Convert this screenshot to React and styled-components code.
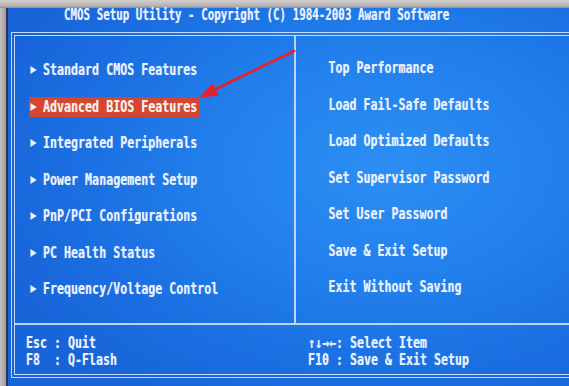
import React from 'react';
import styled, { createGlobalStyle } from 'styled-components';

const Global = createGlobalStyle`
  html, body { margin: 0; padding: 0; width: 569px; height: 386px; overflow: hidden; background: #a9a5a4; }
  #root { width: 569px; height: 386px; }
`;

const FONT = `"DejaVu Sans Mono", "Liberation Mono", monospace`;

const Monitor = styled.div`
  position: relative;
  width: 569px;
  height: 386px;
  display: flex;
  flex-direction: column;
  overflow: hidden;
`;

const TopBezel = styled.div`
  flex: none;
  height: 8px;
  background: linear-gradient(to bottom, #d2cecd, #b9b4b3 70%, #8f8a8d);
`;

const Body = styled.div`
  flex: 1;
  display: flex;
  min-height: 0;
`;

const SideBezel = styled.div`
  flex: none;
  width: 6px;
  background: linear-gradient(to right, #c4bfbe, #a19b9b);
  border-right: 2px solid #2b3150;
`;

const Screen = styled.div`
  flex: 1;
  display: flex;
  flex-direction: column;
  padding: 0 4px 0 3px;
  background:
    radial-gradient(ellipse 70% 75% at 62% 42%, #2c8ef3 0%, #2280ec 40%, #1b70e2 70%, #1763d8 100%);
  font-family: ${FONT};
  font-weight: bold;
  color: #eaf1ff;
  text-shadow: 0 0 1px rgba(225, 238, 255, 0.55);
`;

const TitleBar = styled.div`
  flex: none;
  height: 24px;
  display: flex;
  align-items: flex-start;
  padding-left: 53px;
  font-size: 15.5px;
  line-height: 15px;
`;

const Scaled = styled.span`
  display: inline-block;
  white-space: pre;
  transform: scaleX(${p => p.$s || 0.705});
  transform-origin: left center;
`;

const Box = styled.div`
  flex: none;
  height: 346px;
  box-sizing: border-box;
  border: 4px double #c4daf7;
  display: grid;
  grid-template-columns: 279px 2px 1fr;
  grid-template-rows: 1fr 2px 49px;
`;

const Menu = styled.div`
  display: flex;
  flex-direction: column;
  gap: 16.5px;
  padding-top: ${p => p.$top}px;
  padding-left: ${p => p.$left}px;
`;

const Item = styled.div`
  display: flex;
  align-items: center;
  width: max-content;
  height: 20px;
  padding: 0 3px 0 2px;
  font-size: 16.5px;
  line-height: 20px;
  white-space: pre;
  transform: scaleX(0.705);
  transform-origin: left center;
  background: ${p => (p.$active ? '#d4462f' : 'transparent')};
  color: ${p => (p.$active ? '#fdf1ea' : '#eaf1ff')};
`;

const Pointer = styled.span`
  width: 0;
  height: 0;
  border-left: 9px solid #eef4ff;
  border-top: 4.5px solid transparent;
  border-bottom: 4.5px solid transparent;
  margin-right: 9px;
`;

const VLine = styled.div`
  background: #bcd4f5;
`;

const HLine = styled.div`
  grid-column: 1 / -1;
  background: #bcd4f5;
`;

const Footer = styled.div`
  grid-column: 1 / -1;
  display: grid;
  grid-template-columns: 281px 1fr;
  padding-top: 9.5px;
  font-size: 15px;
`;

const FooterCol = styled.div`
  display: flex;
  flex-direction: column;
  padding-left: ${p => p.$left}px;
`;

const FooterLine = styled(Scaled)`
  line-height: 17px;
`;

const Overlay = styled.svg`
  position: absolute;
  left: 0;
  top: 0;
  pointer-events: none;
`;

const leftItems = [
  'Standard CMOS Features',
  'Advanced BIOS Features',
  'Integrated Peripherals',
  'Power Management Setup',
  'PnP/PCI Configurations',
  'PC Health Status',
  'Frequency/Voltage Control',
];

const rightItems = [
  'Top Performance',
  'Load Fail-Safe Defaults',
  'Load Optimized Defaults',
  'Set Supervisor Password',
  'Set User Password',
  'Save & Exit Setup',
  'Exit Without Saving',
];

export default function App() {
  return (
    <>
      <Global />
      <Monitor>
        <TopBezel />
        <Body>
          <SideBezel />
          <Screen>
            <TitleBar>
              <Scaled $s={0.7}>CMOS Setup Utility - Copyright (C) 1984-2003 Award Software</Scaled>
            </TitleBar>
            <Box>
              <Menu $top={24} $left={14}>
                {leftItems.map((t, i) => (
                  <Item key={t} $active={i === 1}>
                    <Pointer />
                    {t}
                  </Item>
                ))}
              </Menu>
              <VLine />
              <Menu $top={22} $left={31}>
                {rightItems.map(t => (
                  <Item key={t}>{t}</Item>
                ))}
              </Menu>
              <HLine />
              <Footer>
                <FooterCol $left={11}>
                  <FooterLine $s={0.775}>{'Esc : Quit'}</FooterLine>
                  <FooterLine $s={0.775}>{'F8  : Q-Flash'}</FooterLine>
                </FooterCol>
                <FooterCol $left={12}>
                  <FooterLine $s={0.775}>{'↑↓→←: Select Item'}</FooterLine>
                  <FooterLine $s={0.775}>{'F10 : Save & Exit Setup'}</FooterLine>
                </FooterCol>
              </Footer>
            </Box>
          </Screen>
        </Body>
        <Overlay width="569" height="386" viewBox="0 0 569 386">
          <line x1="294" y1="51" x2="214" y2="90" stroke="#e4222c" strokeWidth="2.8" strokeLinecap="round" />
          <polygon points="199,98 219,95.5 212.5,83" fill="#e4222c" />
        </Overlay>
      </Monitor>
    </>
  );
}
